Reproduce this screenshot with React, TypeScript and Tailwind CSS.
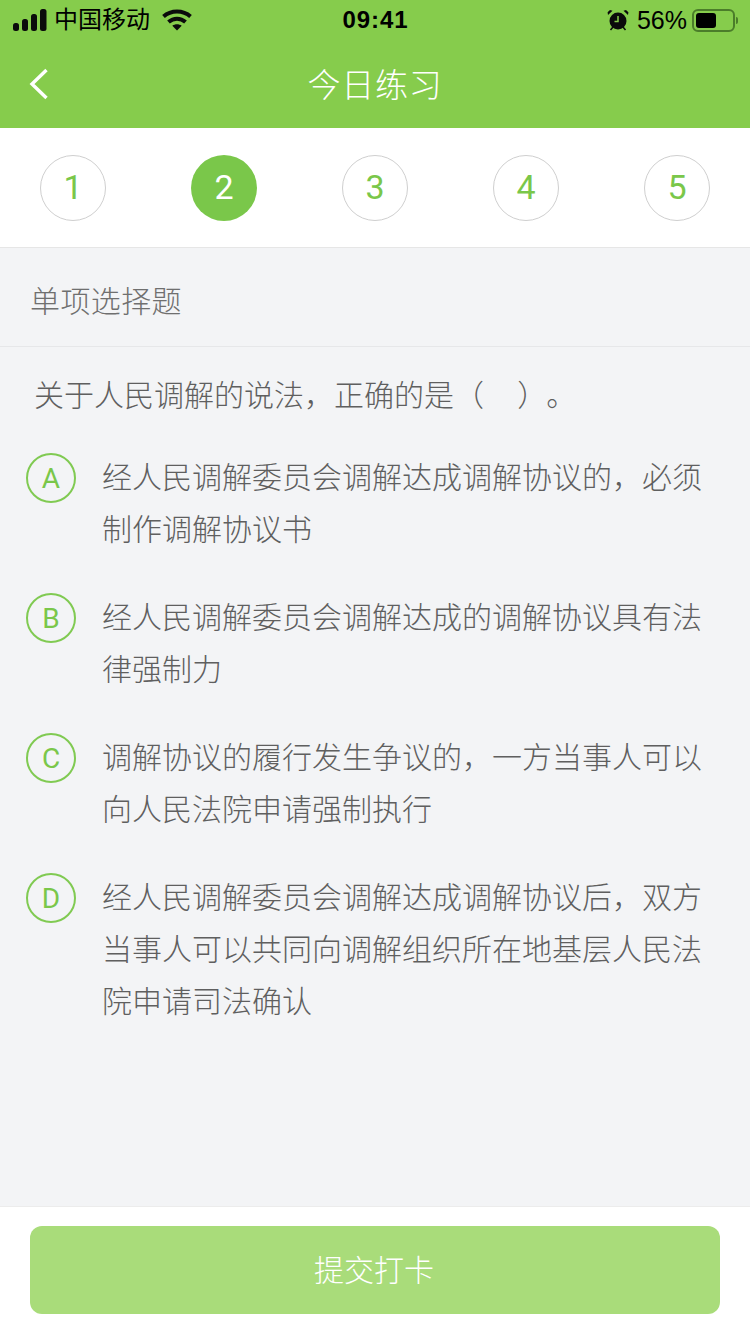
const cjk = "font-['Helvetica_Neue','Liberation_Sans','Noto_Sans_CJK_SC',sans-serif]";
const latin = "font-['Roboto','Noto_Sans_CJK_SC',sans-serif]";

const steps = [1, 2, 3, 4, 5];

const options = [
  { key: "A", lines: ["经人民调解委员会调解达成调解协议的，必须", "制作调解协议书"] },
  { key: "B", lines: ["经人民调解委员会调解达成的调解协议具有法", "律强制力"] },
  { key: "C", lines: ["调解协议的履行发生争议的，一方当事人可以", "向人民法院申请强制执行"] },
  { key: "D", lines: ["经人民调解委员会调解达成调解协议后，双方", "当事人可以共同向调解组织所在地基层人民法", "院申请司法确认"] },
];

function StatusBar() {
  return (
    <div className="flex h-10 items-center justify-between pl-[13px] pr-[12px] text-black">
      <div className="flex w-[200px] items-center">
        <svg width="34" height="22" viewBox="0 0 34 22" fill="#0b0b0b">
          <rect x="0" y="14" width="6" height="8" rx="2.500" />
          <rect x="9" y="10" width="6" height="12" rx="2.500" />
          <rect x="18" y="5" width="6" height="17" rx="2.500" />
          <rect x="27" y="0" width="6.500" height="22" rx="2.500" />
        </svg>
        <span className="ml-[7px] text-[24px] leading-none">中国移动</span>
        <svg className="ml-[12px]" width="30" height="22" viewBox="0 0 30 22" fill="none" stroke="#0b0b0b" strokeWidth="4">
          <path d="M1.500 7.500C9 .8 21 .8 28.500 7.500" />
          <path d="M6.500 13C11.500 8.600 18.500 8.600 23.500 13" />
          <path d="M15 21.500 10.300 16.800C13 14.800 17 14.800 19.700 16.800Z" fill="#0b0b0b" stroke="none" />
        </svg>
      </div>
      <span className="text-[24px] font-semibold leading-none tracking-[0.900px]">09:41</span>
      <div className="flex w-[200px] items-center justify-end">
        <svg width="22" height="22" viewBox="0 0 22 22" fill="#0b0b0b">
          <circle cx="11" cy="12" r="8.500" />
          <path d="M1 6 5.500 1.800 3 1 .6 3.300ZM21 6 16.500 1.800 19 1 21.400 3.300Z" />
          <path d="M3.500 21 6 18M18.500 21 16 18" stroke="#0b0b0b" strokeWidth="1.500" />
          <path d="M11 7v5.500H7.500" stroke="#86cc4c" strokeWidth="1.500" fill="none" />
        </svg>
        <span className="ml-[8px] text-[25px] leading-none">56%</span>
        <div className="ml-[5px] flex h-[23px] w-[43px] items-center rounded-[6px] border-2 border-[#4b7d2a] p-[2px]">
          <div className="h-full w-[20px] rounded-[3px] bg-black" />
        </div>
        <div className="ml-[1px] h-[7px] w-[2px] rounded-r-full bg-[#4b7d2a]" />
      </div>
    </div>
  );
}

export default function App() {
  return (
    <div className={`${cjk} flex h-[1334px] w-[750px] flex-col overflow-hidden bg-[#f3f4f6]`}>
      <header className="h-32 bg-[#86cc4c]">
        <StatusBar />
        <div className="relative flex h-[88px] items-center justify-center pt-[3px]">
          <svg className="absolute left-[29px] top-[28px]" width="20" height="32" viewBox="0 0 20 32" fill="none" stroke="white" strokeWidth="3.400">
            <path d="M17.500 2 3 16l14.500 14" />
          </svg>
          <h1 className="text-[33px] font-light tracking-[0.800px] text-white">今日练习</h1>
        </div>
      </header>

      <div className="flex h-[120px] items-center justify-between border-b border-[#e6e6e6] bg-white px-10">
        {steps.map((n) =>
          n === 2 ? (
            <div key={n} className={`${latin} flex size-[66px] items-center justify-center rounded-full bg-[#7ac74a] text-[34px] text-white`}>
              {n}
            </div>
          ) : (
            <div key={n} className={`${latin} flex size-[66px] items-center justify-center rounded-full border border-[#cfcfcf] text-[34px] text-[#7ac74a]`}>
              {n}
            </div>
          ),
        )}
      </div>

      <div className="flex h-[99px] items-center border-b border-[#e6e7e9] pt-[8px] pl-[30px] text-[30px] font-light tracking-[0.400px] text-[#6f6f6f]">
        单项选择题
      </div>

      <main className="flex-1 text-[30px] font-light leading-[52px] text-[#5f5f5f]">
        <p className="mt-[23px] pl-[34px]">
          关于人民调解的说法，正确的是（&nbsp;&nbsp;&nbsp;&nbsp;）<span className="ml-[14px]">。</span>
        </p>
        <div className="mt-[30px] flex flex-col gap-9 pl-[26px]">
          {options.map((o) => (
            <div key={o.key} className="flex items-start">
              <div className={`${latin} mt-[1px] flex size-[50px] shrink-0 items-center justify-center rounded-full border-2 border-[#80ca52] pt-[1px] text-[28px] font-normal leading-none text-[#7ac74a]`}>
                {o.key}
              </div>
              <div className="ml-[26px]">
                {o.lines.map((line) => (
                  <p key={line} className="whitespace-nowrap">{line}</p>
                ))}
              </div>
            </div>
          ))}
        </div>
      </main>

      <footer className="h-32 border-t border-[#ececec] bg-white px-[30px] pt-[19px]">
        <button className="flex h-[88px] w-full items-center justify-center rounded-[12px] bg-[#a9dc7a] pr-[2px] text-[30px] font-light text-white">
          提交打卡
        </button>
      </footer>
    </div>
  );
}
